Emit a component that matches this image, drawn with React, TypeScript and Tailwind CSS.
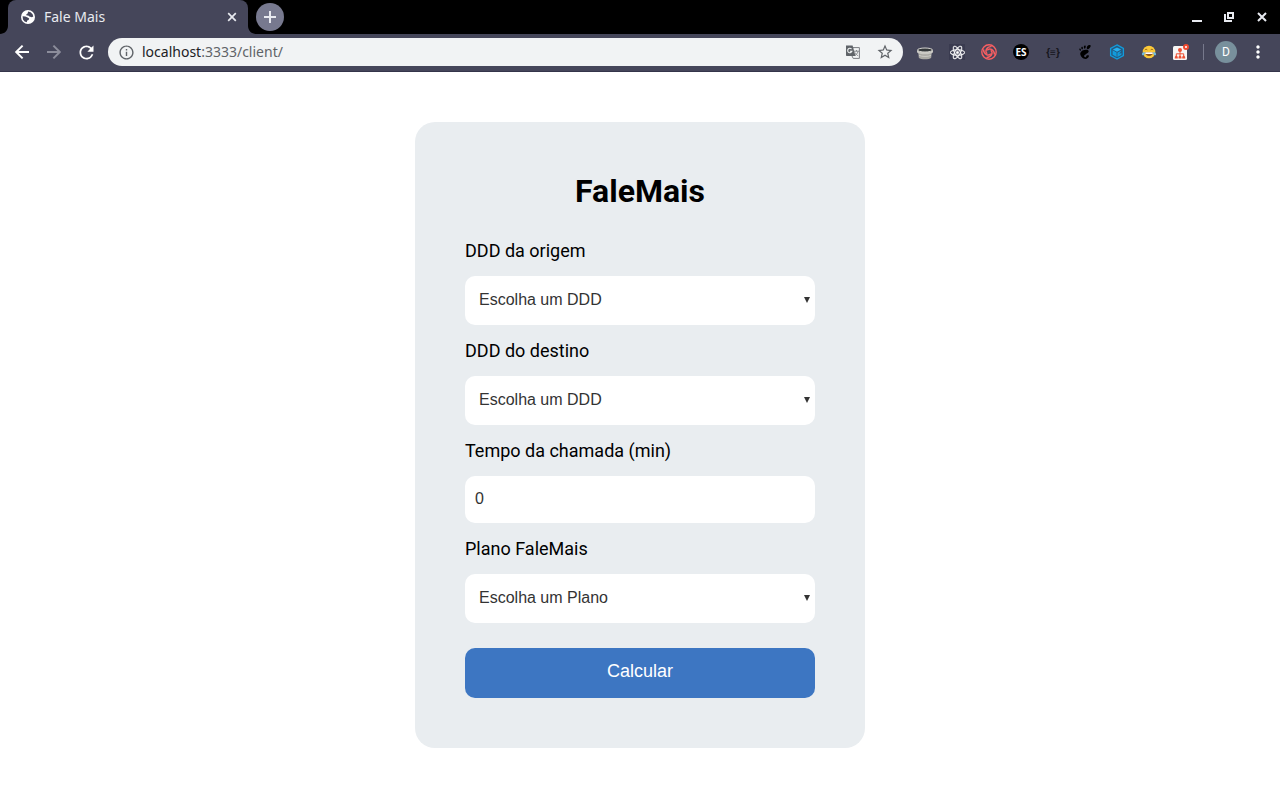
import { useState } from "react";
import type { ReactNode } from "react";
import { MdInfoOutline, MdMoreVert, MdRefresh, MdStarBorder } from "react-icons/md";
import { FaReact } from "react-icons/fa";
import { SiGnome } from "react-icons/si";

function LineIcon({ path, className }: { path: string; className?: string }) {
  return (
    <svg className={className ?? "size-4"} viewBox="0 0 16 16" aria-hidden="true">
      <path d={path} fill="none" stroke="currentColor" strokeWidth="2" />
    </svg>
  );
}

function GlobeIcon() {
  return (
    <svg className="size-4 shrink-0" viewBox="0 0 16 16" aria-hidden="true">
      <circle cx="8" cy="8" r="7" fill="#fff" />
      <path d="M8.2 2.6 10.6 3.2 12.6 5.2 13.3 7.6 11.8 8.3 9.4 7.6 8.2 6.4 6.6 6.6 6.2 5.4 7.6 4.6Z" fill="#45465a" />
      <path d="M2.6 7.2 5.4 7.6 7.6 8.6 9.2 9.6 8.6 11 7.2 11.6 6.8 13.3 4.6 12.4 3 10.4Z" fill="#45465a" />
    </svg>
  );
}

function TranslateIcon() {
  return (
    <svg className="size-4" viewBox="0 0 16 16" aria-hidden="true">
      <path d="M7 3.6h7.4v10.8H8.2L7 12" fill="#f1f3f4" stroke="#7b7e83" strokeWidth="1" />
      <path d="M9 7.2h5M11.5 6v1.2M13 7.4c-.5 2-1.8 3.4-3 4M10.2 8.6c.6 1.6 1.8 2.6 3 3.2" fill="none" stroke="#85888c" strokeWidth="1" />
      <path d="M1 1.5h6.6L10.5 12H1.6L1 11.4Z" fill="#5f6368" />
      <path d="M6.5 5A2.2 2.2 0 1 0 7 7.2H4.9" fill="none" stroke="#f1f3f4" strokeWidth="1.1" />
    </svg>
  );
}

function BucketIcon() {
  return (
    <svg className="size-4" viewBox="0 0 16 16" aria-hidden="true">
      <path d="M1.2 7.5h13.6l-.6 6.2c-2 2.2-10.4 2.2-12.4 0Z" fill="#aaa9a4" />
      <path d="M0 5.6c1 3.4 15 3.4 16 0v2.6c-2 2.7-14 2.7-16 0Z" fill="#c9c8c3" />
      <ellipse cx="8" cy="6" rx="7.5" ry="2" fill="#34383a" stroke="#d6d5d0" strokeWidth="1" />
      <path d="M2 11.4c3 1.4 9 1.4 12 0" fill="none" stroke="#cbcac5" />
    </svg>
  );
}

function KnotIcon() {
  const strand = "M6.2 6.2C8.6 3.6 13 5.2 13.6 10.6";
  return (
    <svg className="size-4" viewBox="0 0 16 16" aria-hidden="true">
      <g fill="none" stroke="#f95f62" strokeWidth="1.4">
        <circle cx="8" cy="8" r="7.2" />
        <path d={strand} />
        <path d={strand} transform="rotate(90 8 8)" />
        <path d={strand} transform="rotate(180 8 8)" />
        <path d={strand} transform="rotate(270 8 8)" />
      </g>
    </svg>
  );
}

function CubeIcon() {
  return (
    <svg className="size-4" viewBox="0 0 16 16" aria-hidden="true">
      <path d="M8 .9 14.4 4.5v7L8 15.1 1.6 11.5v-7Z" fill="#25597f" stroke="#129bdb" strokeWidth="1.3" />
      <path d="M8 3.4 12.2 5.6 8 7.8 3.8 5.6Z" fill="#27b1f1" />
      <path d="M3.6 6.3 7.6 8.5v4.4l-4-2.2Z" fill="#129bdb" />
      <path d="m12.4 6.6-4 2.1v4.2l4-2.2V8.9L10.2 10" fill="#129bdb" />
    </svg>
  );
}

function JoyIcon() {
  return (
    <svg className="size-4" viewBox="0 0 16 16" aria-hidden="true">
      <circle cx="8" cy="8" r="6.3" fill="#fcc938" />
      <path d="M3.9 6.2c.5-1.2 2-1.2 2.5 0M9.6 6.2c.5-1.2 2-1.2 2.5 0" fill="none" stroke="#8a5d1c" strokeWidth="0.9" />
      <path d="M4 8.3h8c0 5-8 5-8 0Z" fill="#8a5420" />
      <path d="M4.3 8.3h7.4v1.7H4.3Z" fill="#fff" />
      <path d="M3.8 8c-2 .2-3.1 1.2-2.9 2.4.3 1.4 2.4 1.2 2.7-.3ZM12.2 8c2 .2 3.1 1.2 2.9 2.4-.3 1.4-2.4 1.2-2.7-.3Z" fill="#6fb9dc" />
    </svg>
  );
}

function OrgChartIcon() {
  return (
    <svg className="size-[18px]" viewBox="0 0 18 18" aria-hidden="true">
      <rect x="1" y="3" width="14" height="14" rx="1.5" fill="#f7f5f4" />
      <circle cx="8" cy="6.9" r="2" fill="#ef5033" />
      <path d="M8 8v5M4.3 13v-2.2h7.4V13" fill="none" stroke="#ef5033" strokeWidth="1" />
      <path d="M2.8 15.6v-1.2c0-2.2 3-2.2 3 0v1.2ZM6.5 15.6v-1.2c0-2.2 3-2.2 3 0v1.2ZM10.2 15.6v-1.2c0-2.2 3-2.2 3 0v1.2Z" fill="#ef5033" />
      <circle cx="14" cy="4" r="2" fill="#fff" stroke="#f04a30" strokeWidth="2" />
    </svg>
  );
}

const extensions: { name: string; icon: ReactNode }[] = [
  { name: "Bucket", icon: <BucketIcon /> },
  {
    name: "React",
    icon: (
      <span className="flex size-4 items-center justify-center bg-[#3a3b50] text-white">
        <FaReact size={15} stroke="currentColor" strokeWidth={14} />
      </span>
    ),
  },
  { name: "Knot", icon: <KnotIcon /> },
  {
    name: "ES",
    icon: (
      <span className="flex size-4 items-center justify-center rounded-full bg-black font-['Open_Sans',sans-serif] text-[10px] font-bold text-white">
        ES
      </span>
    ),
  },
  {
    name: "JSON",
    icon: <span className="font-['Liberation_Sans',sans-serif] text-[10px] font-bold text-[#15151c]">{"{≡}"}</span>,
  },
  { name: "Gnome", icon: <SiGnome size={14} className="text-black" /> },
  { name: "Cube", icon: <CubeIcon /> },
  { name: "Joy", icon: <JoyIcon /> },
  { name: "Chart", icon: <OrgChartIcon /> },
];

function IconButton({ label, children }: { label: string; children: ReactNode }) {
  return (
    <button type="button" aria-label={label} className="flex h-7 w-8 shrink-0 items-center justify-center">
      {children}
    </button>
  );
}

function TabStrip() {
  return (
    <div className="flex h-[34px] items-center bg-black text-[#e8eaf0]">
      <svg className="h-2 w-2 self-end" viewBox="0 0 8 8" aria-hidden="true">
        <path d="M8 0v8H0c4.4 0 8-3.6 8-8Z" fill="#45465a" />
      </svg>
      <div className="flex h-full w-60 items-center gap-2 rounded-t-lg bg-[#45465a] pr-2 pl-3">
        <GlobeIcon />
        <span className="flex-1 text-sm">Fale Mais</span>
        <button type="button" aria-label="Fechar aba" className="flex size-4 items-center justify-center">
          <svg className="size-4" viewBox="0 0 16 16" aria-hidden="true">
            <path d="m4.2 4.2 7.6 7.6M11.8 4.2l-7.6 7.6" fill="none" stroke="currentColor" strokeWidth="1.7" />
          </svg>
        </button>
      </div>
      <svg className="h-2 w-2 self-end" viewBox="0 0 8 8" aria-hidden="true">
        <path d="M0 0v8h8C3.6 8 0 4.4 0 0Z" fill="#45465a" />
      </svg>
      <button
        type="button"
        aria-label="Nova aba"
        className="flex size-7 items-center justify-center rounded-full bg-[#77798f]"
      >
        <LineIcon path="M8 2v12M2 8h12" />
      </button>
      <div className="ml-auto flex items-center pr-[2px]">
        <IconButton label="Minimizar">
          <svg className="size-4" viewBox="0 0 16 16" aria-hidden="true">
            <path d="M2 11h10v2H2Z" fill="currentColor" />
          </svg>
        </IconButton>
        <IconButton label="Restaurar">
          <LineIcon path="M6 4h5v5H6ZM3 5v7h7" />
        </IconButton>
        <IconButton label="Fechar">
          <LineIcon path="m4 4 8 8M12 4l-8 8" />
        </IconButton>
      </div>
    </div>
  );
}

function Toolbar() {
  return (
    <div className="flex h-[38px] items-center border-b border-[#34354a] bg-[#45465a] pr-3 pb-px pl-[6px] text-white">
      <IconButton label="Voltar">
        <LineIcon path="M15 8H2.4M8.6 1.6 2.2 8l6.4 6.4" />
      </IconButton>
      <IconButton label="Avançar">
        <LineIcon path="M1 8h12.6M7.4 1.6 13.8 8l-6.4 6.4" className="size-4 text-[#8c8d9b]" />
      </IconButton>
      <IconButton label="Recarregar">
        <MdRefresh size={21} />
      </IconButton>
      <div className="ml-[6px] flex h-7 min-w-0 flex-1 items-center rounded-full bg-[#f1f3f4] pr-[2px] pl-[10px] text-[#5f6368]">
        <MdInfoOutline size={17} />
        <span className="ml-[7px] flex-1 text-sm">
          <span className="text-[#202124]">localhost</span>:3333/client/
        </span>
        <IconButton label="Traduzir">
          <TranslateIcon />
        </IconButton>
        <IconButton label="Favoritar">
          <MdStarBorder size={18} />
        </IconButton>
      </div>
      <div className="ml-[6px] flex items-center">
        {extensions.map((item) => (
          <IconButton key={item.name} label={item.name}>
            {item.icon}
          </IconButton>
        ))}
      </div>
      <div className="mr-[11px] ml-[6px] h-4 w-px bg-[#77798c]" />
      <button
        type="button"
        aria-label="Perfil"
        className="mr-[11px] flex size-[22px] items-center justify-center rounded-full bg-[#78909c] font-['Roboto',sans-serif] text-xs"
      >
        D
      </button>
      <button type="button" aria-label="Menu" className="flex h-7 w-5 items-center justify-center">
        <MdMoreVert size={20} />
      </button>
    </div>
  );
}

const labelClass = "mb-[15px] block text-lg leading-5";

function SelectField({ id, label, placeholder, options }: { id: string; label: string; placeholder: string; options: string[] }) {
  return (
    <div>
      <label htmlFor={id} className={labelClass}>
        {label}
      </label>
      <div className="relative">
        <select
          id={id}
          className="block h-[49px] w-full appearance-none rounded-[10px] bg-white px-[14px] pb-[2px] font-['Liberation_Sans',Arial,sans-serif] text-base text-[#333]"
        >
          <option value="">{placeholder}</option>
          {options.map((option) => (
            <option key={option}>{option}</option>
          ))}
        </select>
        <svg className="pointer-events-none absolute top-[21px] right-[5px] h-[6px] w-[6px]" viewBox="0 0 6 6" aria-hidden="true">
          <path d="M0 0h6L3 6Z" fill="#333" />
        </svg>
      </div>
    </div>
  );
}

const areaCodes = ["011", "016", "017", "018"];
const plans = ["FaleMais 30", "FaleMais 60", "FaleMais 120"];

export default function App() {
  const [minutes, setMinutes] = useState("0");

  return (
    <div className="min-h-screen bg-white">
      <header className="font-['Noto_Sans',sans-serif]">
        <TabStrip />
        <Toolbar />
      </header>
      <main className="px-4 py-[50px] font-['Roboto',sans-serif] text-black">
        <form
          onSubmit={(event) => event.preventDefault()}
          className="mx-auto max-w-[450px] rounded-[20px] bg-[#e9edf0] p-[50px]"
        >
          <h1 className="mb-[31px] text-center text-[32px] leading-[38px] font-bold">FaleMais</h1>
          <div className="flex flex-col gap-4">
            <SelectField id="origin" label="DDD da origem" placeholder="Escolha um DDD" options={areaCodes} />
            <SelectField id="destination" label="DDD do destino" placeholder="Escolha um DDD" options={areaCodes} />
            <div>
              <label htmlFor="minutes" className={labelClass}>
                Tempo da chamada (min)
              </label>
              <input
                id="minutes"
                type="text"
                inputMode="numeric"
                value={minutes}
                onChange={(event) => setMinutes(event.target.value)}
                className="block h-[47px] w-full rounded-[10px] bg-white px-[10px] pb-[2px] font-['Liberation_Sans',Arial,sans-serif] text-base text-[#333]"
              />
            </div>
            <SelectField id="plan" label="Plano FaleMais" placeholder="Escolha um Plano" options={plans} />
          </div>
          <button
            type="submit"
            className="mt-[25px] block h-[50px] w-full rounded-[10px] bg-[#3d76c2] pb-1 font-['Liberation_Sans',Arial,sans-serif] text-lg text-white"
          >
            Calcular
          </button>
        </form>
      </main>
    </div>
  );
}
